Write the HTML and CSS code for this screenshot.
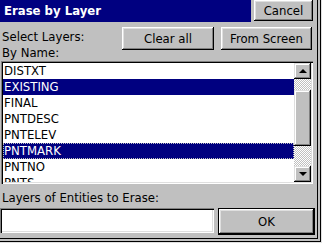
FILE: index.html
```html
<!DOCTYPE html>
<html lang="en">
<head>
  <meta charset="UTF-8">
  <title>Erase by Layer</title>
  <meta name="viewport" content="width=device-width, initial-scale=1.0">
  <link rel="stylesheet" href="styles.css">
</head>
<body>
  <div class="window">
    <div class="titlebar">
      <div class="caption">Erase by Layer</div>
      <button class="btn btn-cancel">Cancel</button>
    </div>

    <div class="select-row">
      <div class="select-label">Select Layers:<br>By Name:</div>
      <button class="btn btn-clear">Clear all</button>
      <button class="btn btn-screen">From Screen</button>
    </div>

    <div class="listbox">
      <ul class="layer-list">
        <li>DISTXT</li>
        <li class="selected">EXISTING</li>
        <li>FINAL</li>
        <li>PNTDESC</li>
        <li>PNTELEV</li>
        <li class="selected focused">PNTMARK</li>
        <li>PNTNO</li>
        <li>PNTS</li>
      </ul>
      <div class="scrollbar">
        <div class="scroll-btn"><span class="arrow arrow-up"></span></div>
        <div class="scroll-track"><div class="scroll-thumb"></div></div>
        <div class="scroll-btn"><span class="arrow arrow-down"></span></div>
      </div>
    </div>

    <div class="erase-label">Layers of Entities to Erase:</div>
    <div class="erase-row">
      <input class="erase-input" type="text">
      <button class="btn btn-ok">OK</button>
    </div>
  </div>
</body>
</html>
```

FILE: styles.css
```css
body {
  margin: 0;
  background-color: #c0c0c0;
  font-family: "DejaVu Sans Condensed", "DejaVu Sans", sans-serif;
  font-size: 13px;
  color: #000;
}
.window {
  width: 322px;
  height: 243px;
  box-sizing: border-box;
  padding: 0 5px 6px 0;
  background-color: #c0c0c0;
  box-shadow: inset -1px -1px 0 #e0e0e0, inset -2px -2px 0 #000,
    inset -4px -4px 0 #c0c0c0, inset -5px -5px 0 #000;
  overflow: hidden;
}

/* raised 3d button */
.btn {
  font: inherit;
  color: #000;
  background-color: #c0c0c0;
  border: none;
  padding: 0;
  box-shadow: inset -1px -1px 0 #000, inset 1px 1px 0 #fff,
    inset -2px -2px 0 #808080, inset 2px 2px 0 #dfdfdf;
}

.titlebar {
  display: flex;
  height: 22px;
}
.caption {
  flex: 1;
  background-color: #000080;
  color: #fff;
  font-weight: bold;
  font-size: 13px;
  line-height: 22px;
  padding-left: 4px;
}
.btn-cancel {
  width: 59px;
  height: 21px;
  margin: 0 4px 1px 3px;
}

.select-row {
  display: flex;
  align-items: flex-start;
  height: 39px;
}
.select-label {
  flex: 1;
  padding: 7px 0 0 2px;
  line-height: 16px;
}
.btn-clear {
  width: 92px;
  height: 23px;
  margin-top: 5px;
}
.btn-screen {
  width: 91px;
  height: 23px;
  margin: 5px 5px 0 7px;
}

/* sunken list box */
.listbox {
  display: flex;
  height: 123px;
  margin: 0 4px 0 1px;
  padding: 2px;
  box-sizing: border-box;
  background-color: #fff;
  box-shadow: inset 1px 1px 0 #808080, inset 2px 2px 0 #000,
    inset -1px -1px 0 #fff, inset -2px -2px 0 #dfdfdf;
  overflow: hidden;
}
.layer-list {
  flex: 1;
  list-style: none;
  margin: 0;
  padding: 0;
  overflow: hidden;
}
.layer-list li {
  height: 16px;
  line-height: 16px;
  padding-left: 1px;
  white-space: nowrap;
}
.layer-list li.selected {
  background-color: #000080;
  color: #fff;
}
.layer-list li.focused {
  outline: 1px dotted #c0c0c0;
  outline-offset: -1px;
}

.scrollbar {
  width: 17px;
  display: flex;
  flex-direction: column;
}
.scroll-btn {
  height: 16px;
  display: flex;
  align-items: center;
  justify-content: center;
  background-color: #c0c0c0;
  box-shadow: inset -1px -1px 0 #000, inset 1px 1px 0 #dfdfdf,
    inset -2px -2px 0 #808080, inset 2px 2px 0 #fff;
}
.arrow {
  width: 0;
  height: 0;
  border-left: 4px solid transparent;
  border-right: 4px solid transparent;
}
.arrow-up {
  border-bottom: 4px solid #000;
  margin-top: -1px;
}
.arrow-down {
  border-top: 4px solid #000;
}
.scroll-track {
  flex: 1;
  padding-top: 11px;
  background: repeating-conic-gradient(#fff 0 25%, #c0c0c0 0 50%) 0 0 / 2px 2px;
}
.scroll-thumb {
  height: 56px;
  background-color: #c0c0c0;
  box-shadow: inset -1px -1px 0 #000, inset 1px 1px 0 #dfdfdf,
    inset -2px -2px 0 #808080, inset 2px 2px 0 #fff;
}

.erase-label {
  padding: 6px 0 0 2px;
  height: 17px;
  line-height: 16px;
}
.erase-row {
  display: flex;
  margin-top: 1px;
}
.erase-input {
  width: 214px;
  height: 25px;
  box-sizing: border-box;
  border: none;
  margin: 0;
  background-color: #fff;
  box-shadow: inset 1px 1px 0 #808080, inset 2px 2px 0 #000,
    inset -1px -1px 0 #fff, inset -2px -2px 0 #dfdfdf;
}
.btn-ok {
  width: 97px;
  height: 27px;
  margin-left: 4px;
  border: 1px solid #000;
}
```
